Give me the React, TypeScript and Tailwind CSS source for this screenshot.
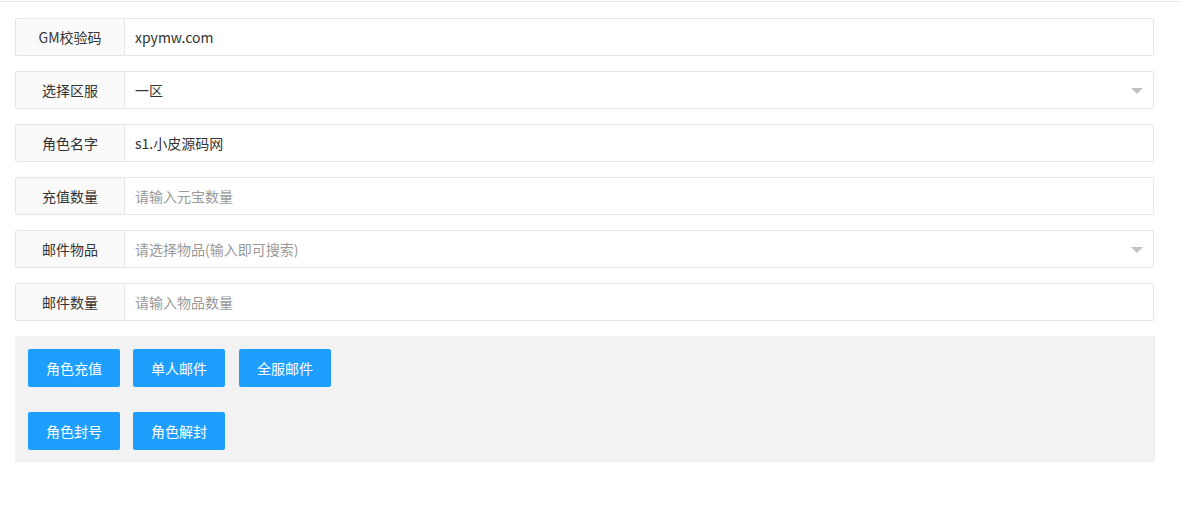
const font = { fontFamily: '"Helvetica Neue", "Noto Sans CJK SC", "Liberation Sans", sans-serif' };

type Field = { label: string; value?: string; placeholder?: string; select?: boolean };

const fields: Field[] = [
    { label: 'GM校验码', value: 'xpymw.com' },
    { label: '选择区服', value: '一区', select: true },
    { label: '角色名字', value: 's1.小皮源码网' },
    { label: '充值数量', placeholder: '请输入元宝数量' },
    { label: '邮件物品', placeholder: '请选择物品(输入即可搜索)', select: true },
    { label: '邮件数量', placeholder: '请输入物品数量' },
];

const Btn = ({ children }: { children: string }) => (
    <button type="button" className="h-[38px] w-[92px] rounded-[2px] bg-[#1E9FFF] text-[14px] text-white">
        {children}
    </button>
);

export default function App() {
    return (
        <div className="min-h-[505px] w-[1180px] bg-white text-[14px] text-[#333]" style={font}>
            <div className="h-[2px] border-b border-[#e6e6e6]" />
            <div className="flex w-[1155px] flex-col gap-[15px] pl-[15px] pt-[16px]">
                {fields.map((f) => (
                    <div key={f.label} className="flex h-[38px] w-[1139px]">
                        <div className="flex w-[110px] shrink-0 items-center justify-center rounded-l-[2px] border border-[#e6e6e6] bg-[#fafafa] text-[#333]">
                            {f.label}
                        </div>
                        <div className="relative flex flex-1 items-center rounded-r-[2px] border border-l-0 border-[#e6e6e6] bg-white pl-[10px]">
                            {f.value ? (
                                <span className="text-[#333]">{f.value}</span>
                            ) : (
                                <span className="text-[#999]">{f.placeholder}</span>
                            )}
                            {f.select && (
                                <span className="absolute right-[10px] top-[16px] h-0 w-0 border-x-[6px] border-t-[6px] border-x-transparent border-t-[#c2c2c2]" />
                            )}
                        </div>
                    </div>
                ))}
                <div className="flex w-[1140px] flex-col gap-[25px] bg-[#f2f2f2] px-[13px] pb-[12px] pt-[13px]">
                    <div className="flex gap-[13px]">
                        <Btn>角色充值</Btn>
                        <Btn>单人邮件</Btn>
                        <span className="ml-[1px] flex">
                            <Btn>全服邮件</Btn>
                        </span>
                    </div>
                    <div className="flex gap-[13px]">
                        <Btn>角色封号</Btn>
                        <Btn>角色解封</Btn>
                    </div>
                </div>
            </div>
        </div>
    );
}
